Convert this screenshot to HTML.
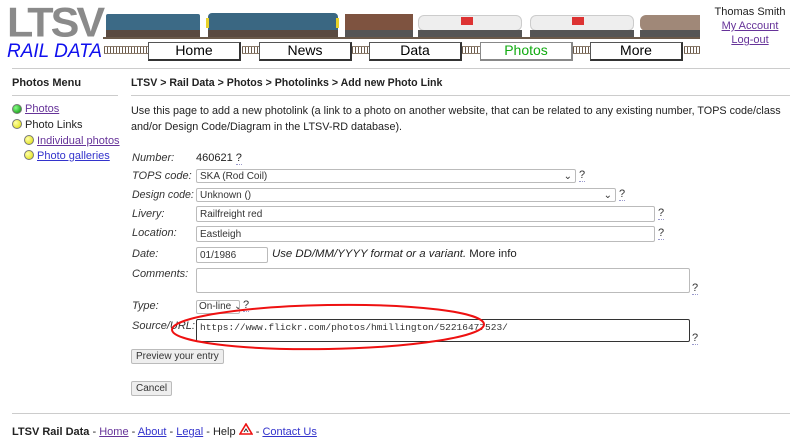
<!DOCTYPE html>
<html><head><meta charset="utf-8"><style>
*{margin:0;padding:0;box-sizing:border-box}
body{width:800px;height:443px;background:#fff;font-family:"Liberation Sans",Arial,sans-serif;font-size:11px;color:#222;position:relative;overflow:hidden}
.a{position:absolute}
a{color:#3333cc;text-decoration:underline}
.lbl{position:absolute;left:132px;font-style:italic;color:#333}
.inp{position:absolute;border:1px solid #bbb;border-radius:2px;background:#fff;font-size:10px;padding:2px 3px;color:#333;height:16px;line-height:11px;white-space:nowrap;overflow:hidden}
.q{position:absolute;color:#333;border-bottom:1px dotted #99c;line-height:11px}
.btn{position:absolute;background:#fff;border:1px solid #555;border-right:2px solid #333;border-bottom:2px solid #333;font-size:14px;text-align:center;line-height:15px;height:19px;width:93px;color:#000}
.trk{position:absolute;height:8px;top:46px;background:repeating-linear-gradient(90deg,#6b5a4a 0 1px,#fff 1px 3px);border-top:1px solid #8a7a6a;border-bottom:1px solid #8a7a6a}
.sbtn{position:absolute;background:#eee;border:1px solid #bbb;border-radius:2px;font-size:10px;color:#333;line-height:13px;padding:0 4px}
.dot{position:absolute;width:10px;height:10px;border-radius:50%;border:1px solid #777}
</style></head><body>
<div class="a" style="left:7px;top:5px;font-size:44px;font-weight:bold;color:#8a8a8a;letter-spacing:-3px;line-height:38px;transform:scale(0.98,0.95);transform-origin:left top">LTSV</div>
<div class="a" style="left:7px;top:41px;font-size:19px;font-style:italic;color:#1010ee;line-height:22px">RAIL DATA</div>
<!-- train -->
<div class="a" style="left:103px;top:37px;width:597px;height:2px;background:#6b5a4a"></div>
<div class="a" style="left:106px;top:14px;width:94px;height:18px;background:#3c6a86;border-radius:2px"></div>
<div class="a" style="left:106px;top:30px;width:94px;height:7px;background:#5a4a40"></div>
<div class="a" style="left:208px;top:13px;width:130px;height:19px;background:#3a6782;border-radius:4px 4px 0 0"></div>
<div class="a" style="left:206px;top:18px;width:3px;height:10px;background:#e8d22a"></div>
<div class="a" style="left:336px;top:18px;width:3px;height:10px;background:#e8d22a"></div>
<div class="a" style="left:208px;top:30px;width:130px;height:7px;background:#5a4a40"></div>
<div class="a" style="left:345px;top:14px;width:68px;height:18px;background:#7e5340"></div>
<div class="a" style="left:345px;top:30px;width:68px;height:7px;background:#555"></div>
<div class="a" style="left:418px;top:15px;width:104px;height:16px;background:#eee;border-radius:6px;border:1px solid #ccc"></div>
<div class="a" style="left:461px;top:17px;width:12px;height:8px;background:#d33"></div>
<div class="a" style="left:418px;top:30px;width:104px;height:7px;background:#555"></div>
<div class="a" style="left:530px;top:15px;width:104px;height:16px;background:#eee;border-radius:6px;border:1px solid #ccc"></div>
<div class="a" style="left:572px;top:17px;width:12px;height:8px;background:#d33"></div>
<div class="a" style="left:530px;top:30px;width:104px;height:7px;background:#555"></div>
<div class="a" style="left:640px;top:15px;width:60px;height:16px;background:#a08878;border-radius:6px 0 0 6px"></div>
<div class="a" style="left:640px;top:30px;width:60px;height:7px;background:#555"></div>
<!-- nav -->
<div class="trk" style="left:104px;width:44px"></div>
<div class="trk" style="left:242px;width:17px"></div>
<div class="trk" style="left:352px;width:17px"></div>
<div class="trk" style="left:462px;width:18px"></div>
<div class="trk" style="left:573px;width:17px"></div>
<div class="trk" style="left:684px;width:16px"></div>
<div class="btn" style="left:148px;top:42px">Home</div>
<div class="btn" style="left:259px;top:42px">News</div>
<div class="btn" style="left:369px;top:42px">Data</div>
<div class="btn" style="left:480px;top:42px;color:#1a1;border-color:#888">Photos</div>
<div class="btn" style="left:590px;top:42px">More</div>
<div class="a" style="left:700px;top:5px;width:100px;text-align:center;line-height:14px;font-size:11px">Thomas Smith<br><a style="color:#639">My Account</a><br><a style="color:#639">Log-out</a></div>
<div class="a" style="left:12px;top:68px;width:778px;height:1px;background:#ccc"></div>
<!-- sidebar -->
<div class="a" style="left:12px;top:77px;font-weight:bold;font-size:11px">Photos Menu</div>
<div class="a" style="left:12px;top:95px;width:106px;height:1px;background:#ccc"></div>
<div class="dot" style="left:12px;top:104px;background:radial-gradient(circle at 35% 35%,#8f8,#080)"></div>
<div class="a" style="left:25px;top:103px"><a style="color:#639">Photos</a></div>
<div class="dot" style="left:12px;top:119px;background:radial-gradient(circle at 35% 35%,#ffa,#dd0)"></div>
<div class="a" style="left:25px;top:119px">Photo Links</div>
<div class="dot" style="left:24px;top:135px;background:radial-gradient(circle at 35% 35%,#ffa,#dd0)"></div>
<div class="a" style="left:37px;top:135px"><a style="color:#639">Individual photos</a></div>
<div class="dot" style="left:24px;top:150px;background:radial-gradient(circle at 35% 35%,#ffa,#dd0)"></div>
<div class="a" style="left:37px;top:150px"><a>Photo galleries</a></div>
<!-- main -->
<div class="a" style="left:131px;top:77px;font-weight:bold;font-size:10.6px">LTSV &gt; Rail Data &gt; Photos &gt; Photolinks &gt; Add new Photo Link</div>
<div class="a" style="left:131px;top:95px;width:659px;height:1px;background:#ccc"></div>
<div class="a" style="left:131px;top:103px;width:662px;line-height:16px;font-size:10.8px">Use this page to add a new photolink (a link to a photo on another website, that can be related to any existing number, TOPS code/class and/or Design Code/Diagram in the LTSV-RD database).</div>
<div class="lbl" style="top:152px">Number:</div><div class="a" style="left:196px;top:152px">460621 <span style="border-bottom:1px dotted #99c">?</span></div>
<div class="lbl" style="top:170px">TOPS code:</div><div class="inp" style="left:196px;top:169px;width:380px;height:14px;padding-top:1px">SKA (Rod Coil)<span style="float:right">&#8964;</span></div><div class="q" style="left:579px;top:170px">?</div>
<div class="lbl" style="top:189px;font-size:10.6px">Design code:</div><div class="inp" style="left:196px;top:188px;width:420px;height:14px;padding-top:1px">Unknown ()<span style="float:right">&#8964;</span></div><div class="q" style="left:619px;top:189px">?</div>
<div class="lbl" style="top:208px">Livery:</div><div class="inp" style="left:196px;top:206px;width:459px">Railfreight red</div><div class="q" style="left:658px;top:208px">?</div>
<div class="lbl" style="top:227px">Location:</div><div class="inp" style="left:196px;top:226px;width:459px">Eastleigh</div><div class="q" style="left:658px;top:228px">?</div>
<div class="lbl" style="top:248px">Date:</div><div class="inp" style="left:196px;top:247px;width:72px">01/1986</div><div class="a" style="left:272px;top:248px;font-size:11.4px"><i>Use DD/MM/YYYY format or a variant.</i> More info</div>
<div class="lbl" style="top:268px">Comments:</div><div class="inp" style="left:196px;top:268px;width:494px;height:25px"></div><div class="q" style="left:692px;top:283px">?</div>
<div class="lbl" style="top:300px">Type:</div><div class="inp" style="left:196px;top:300px;width:44px;height:14px;padding:0 2px;line-height:12px">On-line &#8964;</div><div class="q" style="left:243px;top:300px">?</div>
<div class="lbl" style="top:320px">Source/URL:</div><div class="inp" style="left:196px;top:319px;width:494px;height:23px;border:1px solid #333;font-family:'Liberation Mono',monospace;font-size:9.5px">https://www.flickr.com/photos/hmillington/52216477523/</div><div class="q" style="left:692px;top:333px">?</div>
<svg class="a" style="left:170px;top:302px" width="325" height="50"><ellipse cx="158" cy="25" rx="156" ry="22" fill="none" stroke="#e11" stroke-width="2" transform="rotate(-1 158 25)"/></svg>
<div class="sbtn" style="left:131px;top:349px">Preview your entry</div>
<div class="sbtn" style="left:131px;top:381px">Cancel</div>
<div class="a" style="left:12px;top:413px;width:778px;height:1px;background:#ccc"></div>
<div class="a" style="left:12px;top:423px"><b>LTSV Rail Data</b> - <a style="color:#639">Home</a> - <a>About</a> - <a>Legal</a> - Help <svg width="14" height="12" viewBox="0 0 14 12" style="vertical-align:0"><path d="M7 1L13 11H1Z" fill="#fff" stroke="#e11" stroke-width="1.6"/><path d="M5 9L7 6L9 9" stroke="#333" fill="none"/></svg> - <a>Contact Us</a></div>
</body></html>
